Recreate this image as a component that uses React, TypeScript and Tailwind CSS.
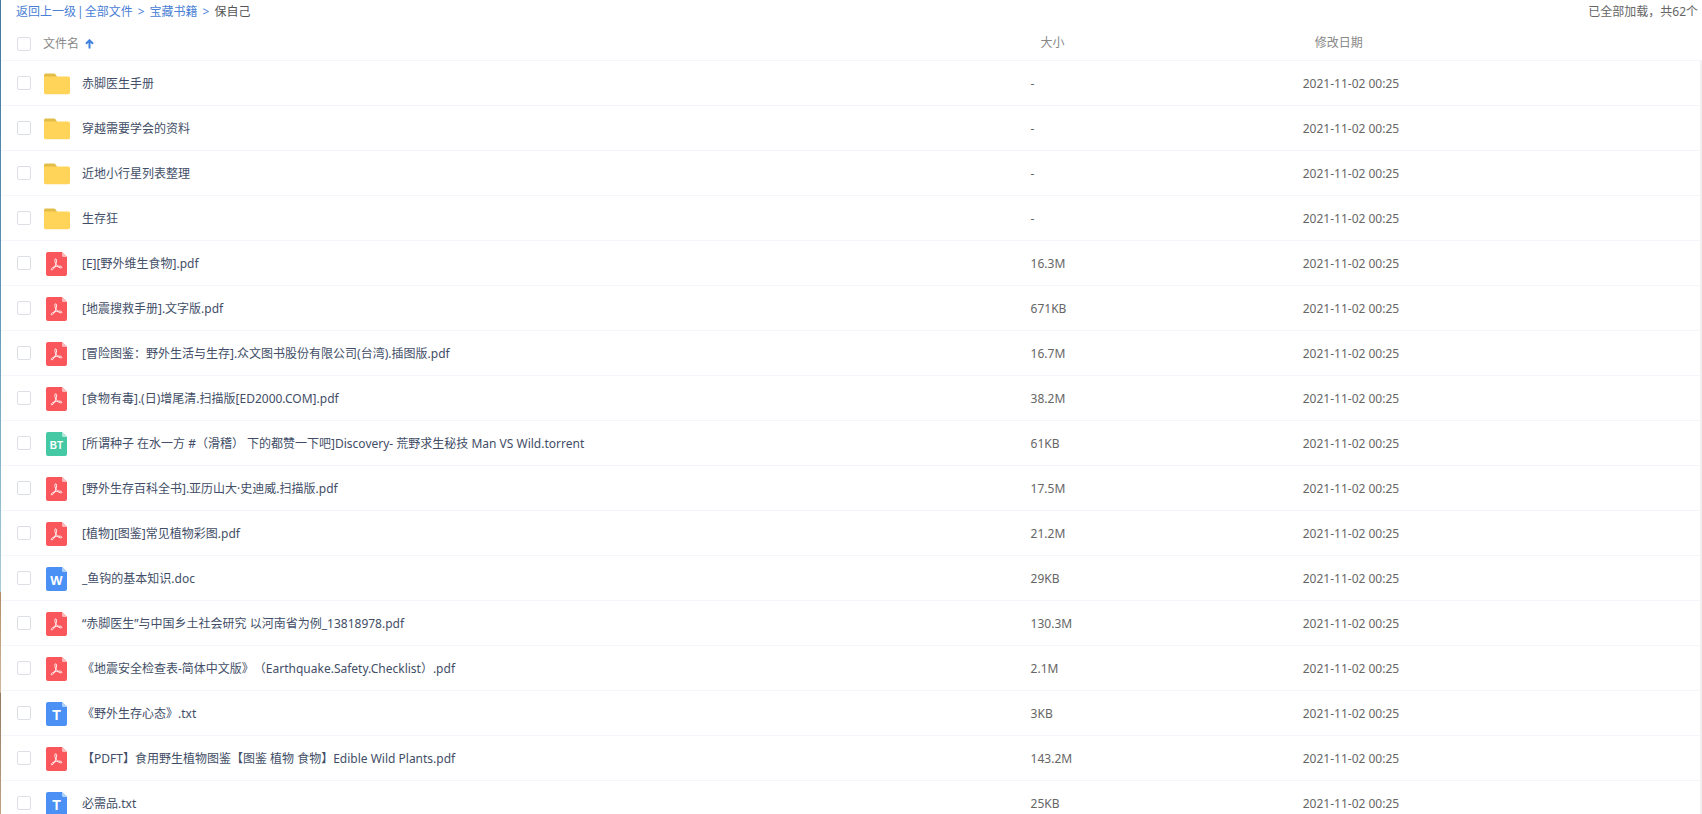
import React from 'react';

type FileKind = 'folder' | 'pdf' | 'bt' | 'word' | 'txt';

interface FileItem {
  name: string;
  kind: FileKind;
  size: string;
  date: string;
}

const DATE = '2021-11-02 00:25';

const files: FileItem[] = [
  { name: '赤脚医生手册', kind: 'folder', size: '-', date: DATE },
  { name: '穿越需要学会的资料', kind: 'folder', size: '-', date: DATE },
  { name: '近地小行星列表整理', kind: 'folder', size: '-', date: DATE },
  { name: '生存狂', kind: 'folder', size: '-', date: DATE },
  { name: '[E][野外维生食物].pdf', kind: 'pdf', size: '16.3M', date: DATE },
  { name: '[地震搜救手册].文字版.pdf', kind: 'pdf', size: '671KB', date: DATE },
  { name: '[冒险图鉴：野外生活与生存].众文图书股份有限公司(台湾).插图版.pdf', kind: 'pdf', size: '16.7M', date: DATE },
  { name: '[食物有毒].(日)增尾清.扫描版[ED2000.COM].pdf', kind: 'pdf', size: '38.2M', date: DATE },
  { name: '[所谓种子 在水一方 #（滑稽） 下的都赞一下吧]Discovery- 荒野求生秘技 Man VS Wild.torrent', kind: 'bt', size: '61KB', date: DATE },
  { name: '[野外生存百科全书].亚历山大·史迪威.扫描版.pdf', kind: 'pdf', size: '17.5M', date: DATE },
  { name: '[植物][图鉴]常见植物彩图.pdf', kind: 'pdf', size: '21.2M', date: DATE },
  { name: '_鱼钩的基本知识.doc', kind: 'word', size: '29KB', date: DATE },
  { name: '“赤脚医生”与中国乡土社会研究 以河南省为例_13818978.pdf', kind: 'pdf', size: '130.3M', date: DATE },
  { name: '《地震安全检查表-简体中文版》（Earthquake.Safety.Checklist）.pdf', kind: 'pdf', size: '2.1M', date: DATE },
  { name: '《野外生存心态》.txt', kind: 'txt', size: '3KB', date: DATE },
  { name: '【PDFT】食用野生植物图鉴【图鉴 植物 食物】Edible Wild Plants.pdf', kind: 'pdf', size: '143.2M', date: DATE },
  { name: '必需品.txt', kind: 'txt', size: '25KB', date: DATE },
];

const palette = {
  pdf: { body: '#f9575b', fold: '#fdb9bb' },
  bt: { body: '#45c8a4', fold: '#b0e8d9' },
  word: { body: '#4a90f5', fold: '#b3d2fc' },
  txt: { body: '#4a90f5', fold: '#b3d2fc' },
};

const letters = {
  bt: { label: 'BT', size: 10, y: 16.5 },
  word: { label: 'W', size: 13, y: 17.5 },
  txt: { label: 'T', size: 14, y: 17.5 },
};

const FolderIcon = () => (
  <svg width="26" height="22" viewBox="0 0 26 22" aria-hidden="true">
    <path d="M0 2A1.6 1.6 0 0 1 1.6.4h8.400c.6 0 1 .2 1.300.6L13 3.400v4H0z" fill="#e2bd48" />
    <path d="M0 3.400h24.400A1.600 1.600 0 0 1 26 5v14.600a1.600 1.600 0 0 1-1.600 1.600H1.600A1.600 1.600 0 0 1 0 19.600z" fill="#ffd458" />
  </svg>
);

const DocIcon = ({ kind }: { kind: Exclude<FileKind, 'folder'> }) => {
  const { body, fold } = palette[kind];
  return (
    <svg width="22" height="24" viewBox="0 0 22 24" aria-hidden="true">
      <path d="M2 0h14l5 5v17a2 2 0 0 1-2 2H2a2 2 0 0 1-2-2V2a2 2 0 0 1 2-2z" fill={body} />
      <path d="M16 0l5 5h-3.500A1.500 1.500 0 0 1 16 3.500z" fill={fold} />
      {kind === 'pdf' ? (
        <path
          d="M9.200 6.900c1.500-.5 1.700 1.200 1.200 3.400-.7 3.400-2.800 7-4.300 7.500-1.300.3-1.200-1.100.3-2 2.200-1.300 5.700-2 8.100-1.600 1.900.4 1.700 1.900.2 1.700-2.600-.3-5.400-3.500-5.800-6.600-.1-1.100 0-2.100.3-2.400z"
          fill="none"
          stroke="#fff"
          strokeOpacity="0.9"
          strokeLinejoin="round"
        />
      ) : (
        <text
          x="10.5"
          y={letters[kind].y}
          textAnchor="middle"
          fill="#fff"
          fontFamily="Liberation Sans, sans-serif"
          fontWeight="bold"
          fontSize={letters[kind].size}
        >
          {letters[kind].label}
        </text>
      )}
    </svg>
  );
};

const Checkbox = ({ label }: { label: string }) => (
  <input
    type="checkbox"
    aria-label={label}
    className="size-3.5 shrink-0 appearance-none rounded-xs border border-[#dcdfe6] bg-white checked:bg-[#3b8cff]"
  />
);

const Breadcrumb = () => (
  <nav className="flex h-6 items-center justify-between pr-1 pl-[15px]">
    <div className="flex items-center text-[#4a80d6]">
      <a href="#up">返回上一级</a>
      <span className="px-px">|</span>
      <a href="#all">全部文件</a>
      <span className="px-[5px]">&gt;</span>
      <a href="#books">宝藏书籍</a>
      <span className="px-[5px]">&gt;</span>
      <span className="text-[#555]">保自己</span>
    </div>
    <span className="text-[#666]">已全部加载，共62个</span>
  </nav>
);

const FileRow = ({ file }: { file: FileItem }) => (
  <tr className="hover:bg-[#f4fbff]">
    <td className="h-[45px] border-b border-[#f3f6fa] p-0">
      <div className="flex items-center pl-4">
        <Checkbox label={file.name} />
        <div className="ml-3 flex items-center pt-0.5">
          <span className="flex w-7 shrink-0 justify-center">
            {file.kind === 'folder' ? <FolderIcon /> : <DocIcon kind={file.kind} />}
          </span>
          <a href="#file" className="ml-[11px] whitespace-nowrap text-[#424e67]">
            {file.name}
          </a>
        </div>
      </div>
    </td>
    <td className="border-b border-[#f3f6fa] p-0 pt-0.5 pl-[9px] text-[#666]">{file.size}</td>
    <td className="border-r-2 border-b border-r-[#f1f1f1] border-b-[#f3f6fa] p-0 pt-0.5 pl-[9px] text-[#666]">
      {file.date}
    </td>
  </tr>
);

const App: React.FC = () => {
  return (
    <div className="flex h-screen overflow-hidden bg-white font-['Noto_Sans','Noto_Sans_CJK_SC',sans-serif] text-xs [text-spacing-trim:space-all]">
      {/* sliver of the desktop behind the window */}
      <div className="w-px shrink-0 bg-[linear-gradient(to_bottom,#44789f_0%,#5b94b4_35%,#a9cbd8_72.7%,#b08a68_72.7%,#d3b89c_85%,#94785c_85.2%,#c0a283_100%)]" />
      <main className="flex min-w-0 grow flex-col">
        <Breadcrumb />
        <div className="grow overflow-hidden">
          <table className="w-full table-fixed border-separate border-spacing-0 text-left">
            <colgroup>
              <col className="w-[60%]" />
              <col className="w-[16%]" />
              <col className="w-[24%]" />
            </colgroup>
            <thead className="text-[#888]">
              <tr>
                <th className="h-[37px] border-b border-[#f3f6fa] p-0 pt-1 font-normal">
                  <div className="flex items-center pl-4">
                    <Checkbox label="全选" />
                    <button type="button" className="ml-3 flex items-center gap-1.5">
                      文件名
                      <svg width="9" height="10" viewBox="0 0 9 10" aria-hidden="true">
                        <path d="M4.500 9.500V1.500M1 4.800l3.500-3.500L8 4.800" fill="none" stroke="#3f82e0" strokeWidth="2" />
                      </svg>
                    </button>
                  </div>
                </th>
                <th className="border-b border-[#f3f6fa] p-0 pt-0.5 pl-[19px] font-normal">大小</th>
                <th className="border-b border-[#f3f6fa] p-0 pt-0.5 pl-[21px] font-normal">修改日期</th>
              </tr>
            </thead>
            <tbody>
              {files.map((file) => (
                <FileRow key={file.name} file={file} />
              ))}
            </tbody>
          </table>
        </div>
      </main>
    </div>
  );
};

export default App;
